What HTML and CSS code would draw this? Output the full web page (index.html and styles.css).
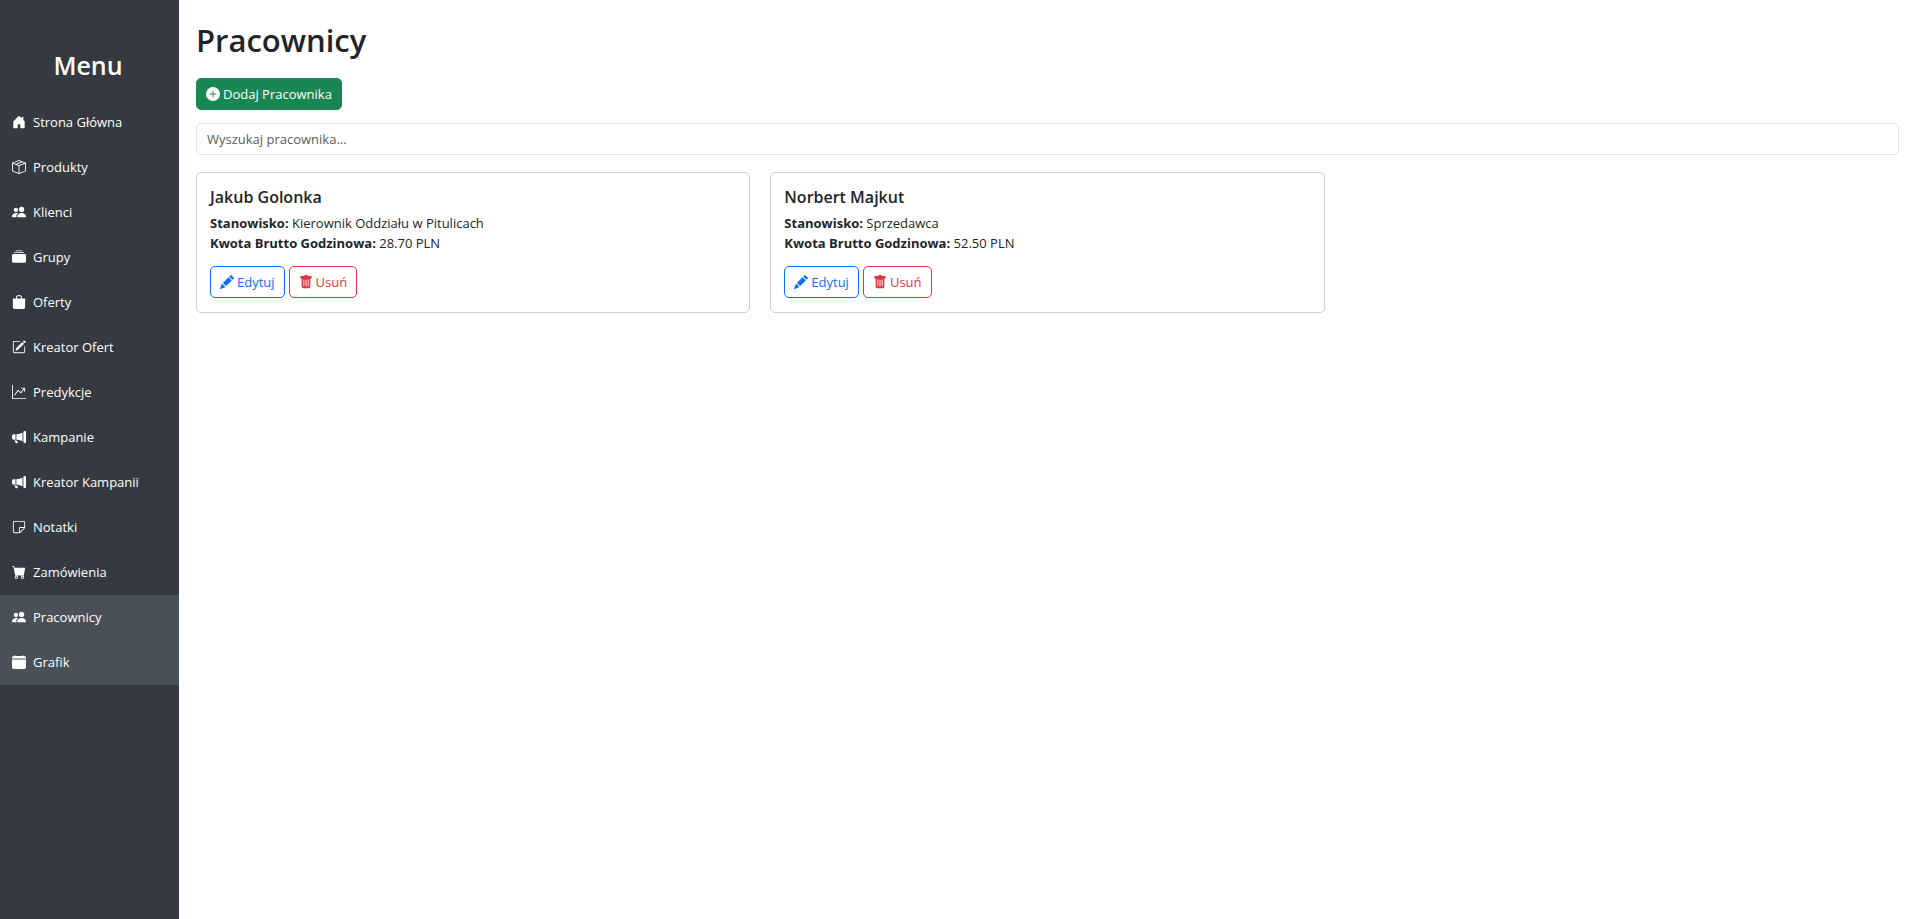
FILE: index.html
```html
<!DOCTYPE html>
<html lang="pl">
<head>
<meta charset="utf-8">
<title>Pracownicy</title>
<link rel="stylesheet" href="styles.css">
</head>
<body>
<svg class="sprite" aria-hidden="true">
  <symbol id="house" viewBox="0 0 16 16"><path d="M6.5 14.5v-3.505c0-.245.25-.495.5-.495h2c.25 0 .5.25.5.5v3.5a.5.5 0 0 0 .5.5h4a.5.5 0 0 0 .5-.5v-7a.5.5 0 0 0-.146-.354L13 5.793V2.5a.5.5 0 0 0-.5-.5h-1a.5.5 0 0 0-.5.5v1.293L8.354 1.146a.5.5 0 0 0-.708 0l-6 6A.5.5 0 0 0 1.5 7.5v7a.5.5 0 0 0 .5.5h4a.5.5 0 0 0 .5-.5"/></symbol>
  <symbol id="box" viewBox="0 0 16 16"><path d="M8.186 1.113a.5.5 0 0 0-.372 0L1.846 3.5l2.404.961L10.404 2zm3.564 1.426L5.596 5 8 5.961 14.154 3.5zm3.25 1.7-6.5 2.6v7.922l6.5-2.6V4.24zM7.5 14.762V6.838L1 4.239v7.923zM7.443.184a1.5 1.5 0 0 1 1.114 0l7.129 2.852A.5.5 0 0 1 16 3.5v8.662a1 1 0 0 1-.629.928l-7.185 2.874a.5.5 0 0 1-.372 0L.63 13.09a1 1 0 0 1-.63-.928V3.5a.5.5 0 0 1 .314-.464z"/></symbol>
  <symbol id="people" viewBox="0 0 16 16"><path d="M7 14s-1 0-1-1 1-4 5-4 5 3 5 4-1 1-1 1zm4-6a3 3 0 1 0 0-6 3 3 0 0 0 0 6m-5.784 6A2.24 2.24 0 0 1 5 13c0-1.355.68-2.75 1.936-3.72A6.3 6.3 0 0 0 5 9c-4 0-5 3-5 4s1 1 1 1zM4.5 8a2.5 2.5 0 1 0 0-5 2.5 2.5 0 0 0 0 5"/></symbol>
  <symbol id="collection" viewBox="0 0 16 16"><path d="M0 13a1.5 1.5 0 0 0 1.5 1.5h13A1.5 1.5 0 0 0 16 13V6a1.5 1.5 0 0 0-1.5-1.5h-13A1.5 1.5 0 0 0 0 6zM2 3a.5.5 0 0 0 .5.5h11a.5.5 0 0 0 0-1h-11A.5.5 0 0 0 2 3m2-2a.5.5 0 0 0 .5.5h7a.5.5 0 0 0 0-1h-7A.5.5 0 0 0 4 1"/></symbol>
  <symbol id="bag" viewBox="0 0 16 16"><path d="M8 1a2.5 2.5 0 0 1 2.5 2.5V4h-5v-.5A2.5 2.5 0 0 1 8 1m3.5 3v-.5a3.5 3.5 0 1 0-7 0V4H1v10a2 2 0 0 0 2 2h10a2 2 0 0 0 2-2V4z"/></symbol>
  <symbol id="edit-square" viewBox="0 0 16 16"><path d="M15.502 1.94a.5.5 0 0 1 0 .706L14.459 3.69l-2-2L13.502.646a.5.5 0 0 1 .707 0l1.293 1.293zm-1.75 2.456-2-2L4.939 9.21a.5.5 0 0 0-.121.196l-.805 2.414a.25.25 0 0 0 .316.316l2.414-.805a.5.5 0 0 0 .196-.12z"/><path fill-rule="evenodd" d="M1 13.5A1.5 1.5 0 0 0 2.5 15h11a1.5 1.5 0 0 0 1.5-1.5v-6a.5.5 0 0 0-1 0v6a.5.5 0 0 1-.5.5h-11a.5.5 0 0 1-.5-.5v-11a.5.5 0 0 1 .5-.5H9a.5.5 0 0 0 0-1H2.5A1.5 1.5 0 0 0 1 2.5z"/></symbol>
  <symbol id="graph" viewBox="0 0 16 16"><path fill-rule="evenodd" d="M0 0h1v15h15v1H0zm10 3.5a.5.5 0 0 1 .5-.5h4a.5.5 0 0 1 .5.5v4a.5.5 0 0 1-1 0V4.9l-3.613 4.417a.5.5 0 0 1-.74.037L7.06 6.767l-3.656 5.027a.5.5 0 0 1-.808-.588l4-5.5a.5.5 0 0 1 .758-.06l2.609 2.61L13.445 4H10.5a.5.5 0 0 1-.5-.5"/></symbol>
  <symbol id="megaphone" viewBox="0 0 16 16"><path d="M13 2.5a1.5 1.5 0 0 1 3 0v11a1.5 1.5 0 0 1-3 0zm-1 .724c-2.067.95-4.539 1.481-7 1.656v6.237a25 25 0 0 1 1.088.085c2.053.204 4.038.668 5.912 1.56zm-8 7.841V4.934c-.68.027-1.399.043-2.008.053A2.02 2.02 0 0 0 0 7v2c0 1.106.896 1.996 1.994 2.009l.496.008a64 64 0 0 1 1.51.048m1.39 1.081q.428.032.85.078l.253 1.69a1 1 0 0 1-.983 1.187h-.548a1 1 0 0 1-.916-.599l-1.314-2.48a66 66 0 0 1 1.692.064q.491.026.966.06"/></symbol>
  <symbol id="sticky" viewBox="0 0 16 16"><path d="M2.5 1A1.5 1.5 0 0 0 1 2.5v11A1.5 1.5 0 0 0 2.5 15h6.086a1.5 1.5 0 0 0 1.06-.44l4.915-4.914A1.5 1.5 0 0 0 15 8.586V2.5A1.5 1.5 0 0 0 13.5 1zM2 2.5a.5.5 0 0 1 .5-.5h11a.5.5 0 0 1 .5.5V8H9.5A1.5 1.5 0 0 0 8 9.5V14H2.5a.5.5 0 0 1-.5-.5zm7 11.293V9.5a.5.5 0 0 1 .5-.5h4.293z"/></symbol>
  <symbol id="cart" viewBox="0 0 16 16"><path d="M0 1.5A.5.5 0 0 1 .5 1H2a.5.5 0 0 1 .485.379L2.89 3H14.5a.5.5 0 0 1 .491.592l-1.5 8A.5.5 0 0 1 13 12H4a.5.5 0 0 1-.491-.408L2.01 3.607 1.61 2H.5a.5.5 0 0 1-.5-.5M5 12a2 2 0 1 0 0 4 2 2 0 0 0 0-4m7 0a2 2 0 1 0 0 4 2 2 0 0 0 0-4m-7 1a1 1 0 1 1 0 2 1 1 0 0 1 0-2m7 0a1 1 0 1 1 0 2 1 1 0 0 1 0-2"/></symbol>
  <symbol id="calendar" viewBox="0 0 16 16"><path d="M3.5 0a.5.5 0 0 1 .5.5V1h8V.5a.5.5 0 0 1 1 0V1h1a2 2 0 0 1 2 2v1H0V3a2 2 0 0 1 2-2h1V.5a.5.5 0 0 1 .5-.5M16 14V5H0v9a2 2 0 0 0 2 2h12a2 2 0 0 0 2-2"/></symbol>
  <symbol id="plus" viewBox="0 0 16 16"><path d="M16 8A8 8 0 1 1 0 8a8 8 0 0 1 16 0M8.5 4.5a.5.5 0 0 0-1 0v3h-3a.5.5 0 0 0 0 1h3v3a.5.5 0 0 0 1 0v-3h3a.5.5 0 0 0 0-1h-3z"/></symbol>
  <symbol id="pencil" viewBox="0 0 16 16"><path d="M12.854.146a.5.5 0 0 0-.707 0L10.5 1.793 14.207 5.5l1.647-1.646a.5.5 0 0 0 0-.708zm.646 6.061L9.793 2.5 3.293 9H3.5a.5.5 0 0 1 .5.5v.5h.5a.5.5 0 0 1 .5.5v.5h.5a.5.5 0 0 1 .5.5v.5h.5a.5.5 0 0 1 .5.5v.207zm-7.468 7.468A.5.5 0 0 1 6 13.5V13h-.5a.5.5 0 0 1-.5-.5V12h-.5a.5.5 0 0 1-.5-.5V11h-.5a.5.5 0 0 1-.5-.5V10h-.5a.5.5 0 0 1-.175-.032l-.179.178a.5.5 0 0 0-.11.168l-2 5a.5.5 0 0 0 .65.65l5-2a.5.5 0 0 0 .168-.11z"/></symbol>
  <symbol id="trash" viewBox="0 0 16 16"><path d="M2.5 1a1 1 0 0 0-1 1v1a1 1 0 0 0 1 1H3v9a2 2 0 0 0 2 2h6a2 2 0 0 0 2-2V4h.5a1 1 0 0 0 1-1V2a1 1 0 0 0-1-1H10a1 1 0 0 0-1-1H7a1 1 0 0 0-1 1zm3 4a.5.5 0 0 1 .5.5v7a.5.5 0 0 1-1 0v-7a.5.5 0 0 1 .5-.5M8 5a.5.5 0 0 1 .5.5v7a.5.5 0 0 1-1 0v-7A.5.5 0 0 1 8 5m3 .5v7a.5.5 0 0 1-1 0v-7a.5.5 0 0 1 1 0"/></symbol>
</svg>
<div class="layout">
  <aside class="sidebar">
    <h2 class="sidebar-title">Menu</h2>
    <nav class="menu">
      <a class="menu-link" href="#"><svg class="icon"><use href="#house"/></svg>Strona Główna</a>
      <a class="menu-link" href="#"><svg class="icon"><use href="#box"/></svg>Produkty</a>
      <a class="menu-link" href="#"><svg class="icon"><use href="#people"/></svg>Klienci</a>
      <a class="menu-link" href="#"><svg class="icon"><use href="#collection"/></svg>Grupy</a>
      <a class="menu-link" href="#"><svg class="icon"><use href="#bag"/></svg>Oferty</a>
      <a class="menu-link" href="#"><svg class="icon"><use href="#edit-square"/></svg>Kreator Ofert</a>
      <a class="menu-link" href="#"><svg class="icon"><use href="#graph"/></svg>Predykcje</a>
      <a class="menu-link" href="#"><svg class="icon"><use href="#megaphone"/></svg>Kampanie</a>
      <a class="menu-link" href="#"><svg class="icon"><use href="#megaphone"/></svg>Kreator Kampanii</a>
      <a class="menu-link" href="#"><svg class="icon"><use href="#sticky"/></svg>Notatki</a>
      <a class="menu-link" href="#"><svg class="icon"><use href="#cart"/></svg>Zamówienia</a>
      <a class="menu-link active" href="#"><svg class="icon"><use href="#people"/></svg>Pracownicy</a>
      <a class="menu-link active" href="#"><svg class="icon"><use href="#calendar"/></svg>Grafik</a>
    </nav>
  </aside>
  <main class="content">
    <h1 class="page-title">Pracownicy</h1>
    <button class="btn btn-success" type="button"><svg class="icon"><use href="#plus"/></svg>Dodaj Pracownika</button>
    <input class="search" type="text" placeholder="Wyszukaj pracownika..." aria-label="Wyszukaj pracownika">
    <div class="cards">
      <article class="card">
        <h5 class="card-title">Jakub Golonka</h5>
        <p class="card-text"><strong>Stanowisko:</strong> Kierownik Oddziału w Pitulicach<br><strong>Kwota Brutto Godzinowa:</strong> 28.70 PLN</p>
        <div class="actions">
          <button class="btn btn-primary" type="button"><svg class="icon"><use href="#pencil"/></svg>Edytuj</button>
          <button class="btn btn-danger" type="button"><svg class="icon"><use href="#trash"/></svg>Usuń</button>
        </div>
      </article>
      <article class="card">
        <h5 class="card-title">Norbert Majkut</h5>
        <p class="card-text"><strong>Stanowisko:</strong> Sprzedawca<br><strong>Kwota Brutto Godzinowa:</strong> 52.50 PLN</p>
        <div class="actions">
          <button class="btn btn-primary" type="button"><svg class="icon"><use href="#pencil"/></svg>Edytuj</button>
          <button class="btn btn-danger" type="button"><svg class="icon"><use href="#trash"/></svg>Usuń</button>
        </div>
      </article>
    </div>
  </main>
</div>
</body>
</html>
```
FILE: styles.css
```css
* {
  box-sizing: border-box;
}

body {
  margin: 0;
  background: #fff;
  color: #212529;
  font-family: "Segoe UI", "Open Sans", "Noto Sans", sans-serif;
  font-size: 13px;
  line-height: 20px;
}

.sprite {
  display: none;
}

.layout {
  display: flex;
  min-height: 100vh;
}

.sidebar {
  flex: 0 0 179px;
  padding-top: 49px;
  background: #343a40;
  color: #fff;
}

.sidebar-title {
  margin: 0 0 19px;
  padding-right: 3px;
  font-size: 25px;
  font-weight: 600;
  line-height: 32px;
  text-align: center;
}

.menu {
  display: flex;
  flex-direction: column;
}

.menu-link {
  display: flex;
  align-items: center;
  gap: 7px;
  height: 45px;
  padding: 0 12px 2px;
  color: #fff;
  text-decoration: none;
}

.menu-link.active {
  background: #495057;
}

.icon {
  flex: none;
  width: 14px;
  height: 14px;
  fill: currentColor;
}

.content {
  flex: 1;
  min-width: 0;
  padding: 20px 17px;
}

.page-title {
  margin: 0 0 18px;
  font-size: 31px;
  font-weight: 600;
  line-height: 40px;
}

.btn {
  display: inline-flex;
  align-items: center;
  gap: 3px;
  height: 32px;
  padding: 0 9px;
  border: 1px solid currentColor;
  border-radius: 5px;
  background: #fff;
  font: inherit;
}

.btn-success {
  border-color: #198754;
  background: #198754;
  color: #fff;
}

.btn-primary {
  color: #0d6efd;
}

.btn-danger {
  color: #dc3545;
}

.search {
  display: block;
  width: 100%;
  height: 32px;
  margin: 13px 0 17px;
  padding: 0 10px;
  border: 1px solid #dee2e6;
  border-radius: 5px;
  color: #212529;
  font: inherit;
}

.search::placeholder {
  color: #595c5f;
  opacity: 1;
}

.cards {
  display: grid;
  grid-template-columns: repeat(3, 1fr);
  gap: 20px;
}

.card {
  padding: 14px 13px;
  border: 1px solid #d0d0d1;
  border-radius: 5px;
}

.card-title {
  margin: 0 0 6px;
  font-size: 16px;
  font-weight: 600;
  line-height: 20px;
}

.card-text {
  margin: 0 0 13px;
}

.actions {
  display: flex;
  gap: 4px;
}
```
